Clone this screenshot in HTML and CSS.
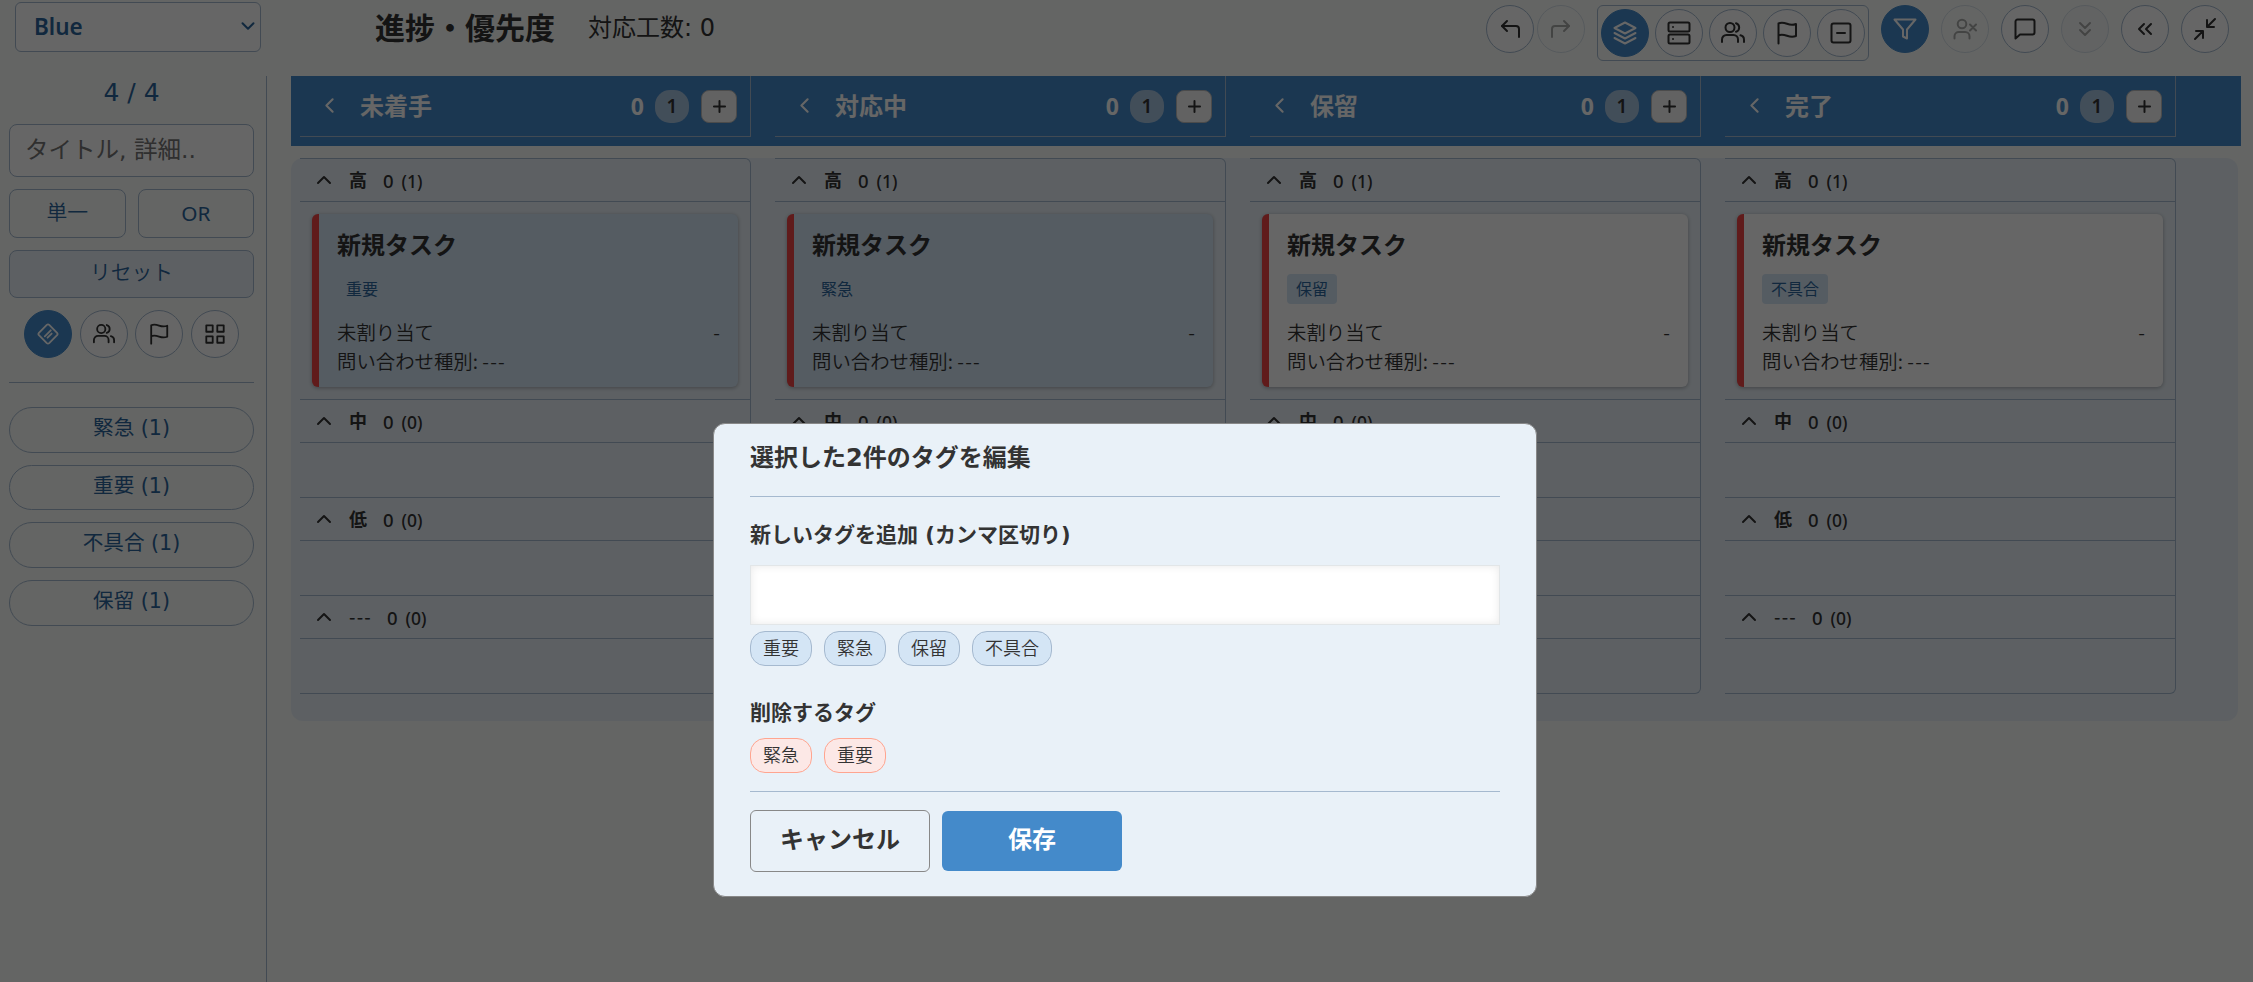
FILE: index.html
```html
<!DOCTYPE html>
<html lang="ja">
<head>
<meta charset="utf-8">
<title>進捗・優先度</title>
<link rel="stylesheet" href="styles.css">
</head>
<body>
<svg class="sprite" aria-hidden="true">
  <symbol id="i-undo" viewBox="0 0 24 24"><path d="M9 14 4 9l5-5"/><path d="M4 9h14a3 3 0 0 1 3 3v8"/></symbol>
  <symbol id="i-redo" viewBox="0 0 24 24"><path d="m15 14 5-5-5-5"/><path d="M20 9H6a3 3 0 0 0-3 3v8"/></symbol>
  <symbol id="i-layers" viewBox="0 0 24 24"><path d="M12 1.500 1.500 7 12 12.500 22.500 7z"/><path d="m1.500 12 10.500 5.500L22.500 12"/><path d="m1.500 17 10.500 5.500L22.500 17"/></symbol>
  <symbol id="i-server" viewBox="0 0 24 24"><rect x="1.500" y="1.500" width="21" height="9" rx="1.500"/><rect x="1.500" y="13.500" width="21" height="9" rx="1.500"/><path d="M6 6h.01M6 18h.01"/></symbol>
  <symbol id="i-users" viewBox="0 0 24 24"><circle cx="9" cy="6.500" r="4.500"/><path d="M1 21v-2.500A4.500 4.500 0 0 1 5.500 14h7a4.500 4.500 0 0 1 4.500 4.500V21"/><path d="M15 2.200a4.500 4.500 0 0 1 0 8.600"/><path d="M19.500 14.300a4.500 4.500 0 0 1 3.500 4.400V21"/></symbol>
  <symbol id="i-flag" viewBox="0 0 24 24"><path d="M3.500 22.500V2.500c2-1 5-1 8.500.3s6.500 1.200 9 .2v12c-2.500 1-5.500 1-9-.2s-6.500-1.300-8.500-.3"/></symbol>
  <symbol id="i-minus-square" viewBox="0 0 24 24"><rect x="2.500" y="2.500" width="19" height="19" rx="2"/><path d="M8 12h8"/></symbol>
  <symbol id="i-filter" viewBox="0 0 24 24"><path d="M1.500 2.500h21L14 12.500v9l-4-2v-7z"/></symbol>
  <symbol id="i-user-x" viewBox="0 0 24 24"><circle cx="9" cy="7" r="4.300"/><path d="M1.500 21.500v-2.500A4.300 4.300 0 0 1 5.800 15h6.400a4.300 4.300 0 0 1 4.300 4.300v2.200"/><path d="m17 7.500 6 6M23 7.500l-6 6"/></symbol>
  <symbol id="i-message" viewBox="0 0 24 24"><path d="M21.500 15.500a2 2 0 0 1-2 2H7l-4.500 4V4.500a2 2 0 0 1 2-2H19.500a2 2 0 0 1 2 2v11z"/></symbol>
  <symbol id="i-chevrons-down" viewBox="0 0 24 24"><path d="m7 13 5 5 5-5M7 6l5 5 5-5"/></symbol>
  <symbol id="i-chevrons-left" viewBox="0 0 24 24"><path d="m11 17-5-5 5-5M18 17l-5-5 5-5"/></symbol>
  <symbol id="i-minimize" viewBox="0 0 24 24"><path d="M3 14h7v7M21 10h-7V3M14 10l8-8M2 22l8-8"/></symbol>
  <symbol id="i-tag" viewBox="0 0 24 24"><path d="M10.700 2.100a2 2 0 0 1 2.600 0l8.600 8.600a2 2 0 0 1 0 2.600l-8.600 8.600a2 2 0 0 1-2.600 0l-8.600-8.600a2 2 0 0 1 0-2.600z"/><path d="m8.500 14.500 6.500-6.500M11.500 16l4.500-4.500"/></symbol>
  <symbol id="i-grid" viewBox="0 0 24 24"><path d="M2.500 2.500h7v7h-7zM14.500 2.500h7v7h-7zM14.500 14.500h7v7h-7zM2.500 14.500h7v7h-7z"/></symbol>
  <symbol id="i-left" viewBox="0 0 24 24"><path d="m15 18-6-6 6-6"/></symbol>
  <symbol id="i-up" viewBox="0 0 24 24"><path d="m18 15-6-6-6 6"/></symbol>
  <symbol id="i-down" viewBox="0 0 24 24"><path d="m6 9 6 6 6-6"/></symbol>
  <symbol id="i-plus" viewBox="0 0 24 24"><path d="M12 5v14M5 12h14"/></symbol>
</svg>

<div class="app">
  <header class="topbar">
    <div class="select"><span>Blue</span><svg class="icon"><use href="#i-down"/></svg></div>
    <h1 class="title">進捗・優先度</h1>
    <div class="effort">対応工数: 0</div>
    <div class="tools">
      <span class="round"><svg class="icon"><use href="#i-undo"/></svg></span>
      <span class="round faded redo"><svg class="icon"><use href="#i-redo"/></svg></span>
      <div class="group">
        <span class="round on"><svg class="icon"><use href="#i-layers"/></svg></span>
        <span class="round"><svg class="icon"><use href="#i-server"/></svg></span>
        <span class="round"><svg class="icon"><use href="#i-users"/></svg></span>
        <span class="round"><svg class="icon"><use href="#i-flag"/></svg></span>
        <span class="round"><svg class="icon"><use href="#i-minus-square"/></svg></span>
      </div>
      <div class="actions">
        <span class="round on"><svg class="icon"><use href="#i-filter"/></svg></span>
        <span class="round faded"><svg class="icon"><use href="#i-user-x"/></svg></span>
        <span class="round"><svg class="icon"><use href="#i-message"/></svg></span>
        <span class="round faded tinted"><svg class="icon"><use href="#i-chevrons-down"/></svg></span>
        <span class="round"><svg class="icon"><use href="#i-chevrons-left"/></svg></span>
        <span class="round"><svg class="icon"><use href="#i-minimize"/></svg></span>
      </div>
    </div>
  </header>

  <div class="main">
    <aside class="side">
      <div class="count">4 / 4</div>
      <div class="search">タイトル, 詳細..</div>
      <div class="pair"><span class="btn">単一</span><span class="btn or">OR</span></div>
      <span class="btn reset">リセット</span>
      <div class="modes">
        <span class="round on"><svg class="icon"><use href="#i-tag"/></svg></span>
        <span class="round"><svg class="icon"><use href="#i-users"/></svg></span>
        <span class="round"><svg class="icon"><use href="#i-flag"/></svg></span>
        <span class="round"><svg class="icon"><use href="#i-grid"/></svg></span>
      </div>
      <div class="pills">
        <span class="pill">緊急 (1)</span>
        <span class="pill">重要 (1)</span>
        <span class="pill">不具合 (1)</span>
        <span class="pill">保留 (1)</span>
      </div>
    </aside>

    <section class="board">
      <div class="heads" id="heads"></div>
      <div class="lanes" id="lanes"></div>
    </section>
  </div>
</div>

<div class="overlay">
  <div class="modal">
    <h2 class="modal-title">選択した2件のタグを編集</h2>
    <div class="modal-body">
      <h3 class="label">新しいタグを追加 (カンマ区切り)</h3>
      <div class="field"></div>
      <div class="chips"><span class="chip">重要</span><span class="chip">緊急</span><span class="chip">保留</span><span class="chip">不具合</span></div>
      <h3 class="label second">削除するタグ</h3>
      <div class="chips remove"><span class="chip">緊急</span><span class="chip">重要</span></div>
    </div>
    <div class="modal-foot"><span class="cta cancel">キャンセル</span><span class="cta save">保存</span></div>
  </div>
</div>
<script src="board.js"></script>
</body>
</html>
```
FILE: board.js
```js
const columns = [
  { name: '未着手', tag: '重要', selected: true },
  { name: '対応中', tag: '緊急', selected: true },
  { name: '保留', tag: '保留', selected: false },
  { name: '完了', tag: '不具合', selected: false }
];
const priorities = ['高', '中', '低', '---'];
const icon = (id) => `<svg class="icon"><use href="#i-${id}"/></svg>`;

document.getElementById('heads').innerHTML = columns.map((c) => `
  <div class="head">${icon('left')}<span class="head-name">${c.name}</span>
    <span class="head-sum">0</span><span class="head-badge">1</span><span class="head-add">${icon('plus')}</span>
  </div>`).join('');

const card = (c) => `
  <article class="card${c.selected ? ' selected' : ''}">
    <h4 class="card-title">新規タスク</h4>
    <span class="card-tag">${c.tag}</span>
    <div class="card-row"><span>未割り当て</span><span>-</span></div>
    <div class="card-row"><span>問い合わせ種別: <span class="dashes">---</span></span></div>
  </article>`;

document.getElementById('lanes').innerHTML = columns.map((c) => `
  <div class="lane">${priorities.map((p, i) => `
    <div class="group-head">${icon('up')}<b${p === '---' ? ' class="dashes"' : ''}>${p}</b><span>0</span><i>(${i ? 0 : 1})</i></div>
    <div class="group-body${i ? '' : ' filled'}">${i ? '' : card(c)}</div>`).join('')}
  </div>`).join('');
```
FILE: styles.css
```css
* { box-sizing: border-box; }
:root {
  --blue: #448aca;
  --link: #2c659c;
  --line: #a5b9cf;
  --pale: #e9f1f8;
  --ink: #333;
  --wide: "DejaVu Sans", "Noto Sans CJK JP", sans-serif;
}
body {
  margin: 0;
  height: 982px;
  overflow: hidden;
  background: #f9fcf9;
  color: var(--ink);
  font-family: "Noto Sans CJK JP", "Noto Sans", sans-serif;
}
h1, h2, h3, h4 { margin: 0; }
.sprite { display: none; }
.icon {
  width: 24px; height: 24px; flex: none; display: block;
  fill: none; stroke: currentColor; stroke-width: 2;
  stroke-linecap: round; stroke-linejoin: round;
}
.app { height: 982px; display: flex; flex-direction: column; }

.topbar { height: 76px; flex: none; display: flex; align-items: flex-start; padding: 2px 24px 0 15px; }
.select {
  width: 246px; height: 50px; border: 1px solid var(--line); border-radius: 6px; background: #fff;
  display: flex; align-items: center; justify-content: space-between; padding: 0 1px 2px 18px;
  color: var(--link); font: 600 22.500px "Noto Sans", sans-serif;
}
.select .icon { width: 22px; height: 22px; stroke-width: 2.200; }
.title { margin-left: 114px; font-size: 30px; line-height: 49px; font-weight: 700; white-space: nowrap; }
.effort { margin-left: 33px; font-family: var(--wide); font-size: 24px; line-height: 53px; white-space: nowrap; }
.tools { margin-left: auto; padding-top: 3px; display: flex; align-items: flex-start; }
.round {
  width: 48px; height: 48px; flex: none; border-radius: 50%; border: 1px solid var(--line); background: #fff;
  display: flex; align-items: center; justify-content: center;
}
.round.on { background: var(--blue); border-color: var(--blue); color: #fff; }
.round.faded { opacity: .4; }
.round.tinted { background: #f1f1f8; }
.redo { margin-left: 3px; }
.group { height: 56px; margin-left: 12px; padding: 3px; border: 1px solid var(--line); border-radius: 6px; display: flex; gap: 6px; }
.actions { margin-left: 12px; display: flex; gap: 12px; }

.main { flex: 1; display: flex; }
.side { width: 267px; flex: none; border-right: 1px solid var(--line); padding: 0 12px 0 9px; color: var(--link); display: flex; flex-direction: column; }
.count { height: 48px; line-height: 33px; text-align: center; font-family: var(--wide); font-size: 25px; }
.search { height: 53px; border: 1px solid var(--line); border-radius: 8px; background: #fff; color: #757575; font-family: var(--wide); font-size: 23.500px; line-height: 50px; padding-left: 15px; white-space: nowrap; overflow: hidden; }
.pair { display: flex; gap: 12px; margin: 12px 0; }
.btn { flex: 1; height: 49px; border: 1px solid var(--line); border-radius: 8px; text-align: center; font-size: 20.800px; line-height: 42px; font-weight: 350; }
.or { font-family: "Noto Sans", sans-serif; font-weight: 400; line-height: 46px; }
.reset { flex: none; height: 48px; background: var(--pale); line-height: 40px; }
.modes { height: 85px; padding: 12px 15px 0; display: flex; justify-content: space-between; border-bottom: 1px solid var(--line); color: var(--ink); }
.modes .icon { width: 22px; height: 22px; }
.pills { padding-top: 24px; display: flex; flex-direction: column; gap: 12px; }
.pill { height: 45.700px; border: 1px solid var(--line); border-radius: 23px; text-align: center; font-family: var(--wide); font-size: 20.600px; line-height: 41px; }

.board { flex: 1; padding: 0 12px 0 24px; }
.heads { height: 70px; background: var(--blue); display: flex; gap: 24px; padding-left: 9px; }
.head { width: 451px; height: 61px; border: solid var(--line); border-width: 0 1px 1px 0; color: #fff; display: flex; align-items: center; padding: 1px 13px 0 17px; }
.head > .icon { width: 25px; height: 25px; margin-top: -2px; }
.head-name { flex: 1; margin: -3px 0 0 18px; font-size: 24px; font-weight: 700; line-height: 32px; }
.head-sum { margin-top: -2px; font-family: "Noto Sans", sans-serif; font-size: 23px; font-weight: 700; }
.head-badge { width: 34px; height: 33px; margin: 0 12px 0 11px; border-radius: 15px; background: #a6c2df; color: var(--ink); font: 600 19px/32px "Noto Sans", sans-serif; text-align: center; }
.head-add { width: 36px; height: 33px; border-radius: 8px; background: #f6f6f6; border: 1px solid #bbb; color: #333; display: flex; align-items: center; justify-content: center; }
.head-add .icon { width: 19px; height: 19px; stroke-width: 2.500; }

.lanes { margin: 12px 3px 0 0; height: 563px; background: var(--pale); border-radius: 12px; display: flex; gap: 24px; padding-left: 9px; }
.lane { width: 451px; height: 536px; border: solid var(--line); border-width: 1px 1px 1px 0; border-radius: 0 6px 6px 0; }
.group-head { height: 43px; border-bottom: 1px solid var(--line); display: flex; align-items: center; padding: 3px 0 0 12px; font-size: 18px; }
.group-head .icon { width: 24px; height: 24px; margin-top: -3px; }
.group-head b { margin: -5px 16px 0 13px; font-weight: 700; font-size: 18px; }
.group-head b.dashes { margin-right: 15px; font-weight: 500; }
.group-head span { margin: -2px 8px 0 0; font: 500 18.500px "Noto Sans", sans-serif; }
.group-head i { margin-top: -1px; font: 500 17.500px "Noto Sans", sans-serif; }
.dashes { letter-spacing: 1.200px; }
.group-body { height: 55px; border-bottom: 1px solid var(--line); }
.group-body.filled { height: 198px; padding: 12px 12px 0 12px; }
.group-body:last-child { border: 0; }
.card { height: 173px; border-left: 7px solid #ef4444; border-radius: 6px; background: #fff; box-shadow: 0 1px 4px rgba(0,0,0,.3); padding: 13px 18px 0 18px; }
.card.selected { background: #d4e5f5; }
.card-title { font-size: 24px; line-height: 34px; font-weight: 700; }
.card-tag { display: table; margin: 13px 0 13px; height: 30px; padding: 0 9px; border-radius: 4px; background: #d4e5f5; color: var(--link); font-size: 16px; line-height: 29px; font-weight: 400; }
.card-row { display: flex; justify-content: space-between; font-size: 19.400px; line-height: 29px; font-weight: 350; }

.overlay { position: fixed; inset: 0; background: rgba(0,0,0,.6); }
.modal { position: absolute; left: 713px; top: 423px; width: 824px; height: 474px; padding: 0 36px; background: var(--pale); border: 1px solid #888; border-radius: 12px; }
.modal-title { height: 73px; border-bottom: 1px solid var(--line); font-family: var(--wide); font-size: 24px; line-height: 69px; font-weight: 700; white-space: nowrap; }
.modal-body { height: 295px; border-bottom: 1px solid var(--line); padding-top: 23px; }
.label { font-family: var(--wide); font-size: 21px; line-height: 31px; font-weight: 700; }
.field { height: 60px; margin-top: 14px; background: #fff; border: 1px solid #e2e6e8; box-shadow: inset 0 0 9px rgba(0,0,0,.09); }
.chips { display: flex; gap: 12px; margin-top: 6px; }
.chip { height: 35px; padding: 0 12px; border: 1px solid var(--line); border-radius: 15px; background: #d4e5f5; font-size: 18px; line-height: 30px; font-weight: 350; }
.second { margin-top: 32px; }
.remove { margin-top: 9px; }
.remove .chip { border-color: #ffa590; background: #fce8e6; }
.modal-foot { display: flex; align-items: center; gap: 12px; padding-top: 18px; }
.cta { width: 180px; height: 60px; border-radius: 6px; text-align: center; font-size: 24px; line-height: 54px; font-weight: 700; }
.cancel { height: 62px; border: 1px solid #888; }
.save { background: var(--blue); color: #fff; }
```
